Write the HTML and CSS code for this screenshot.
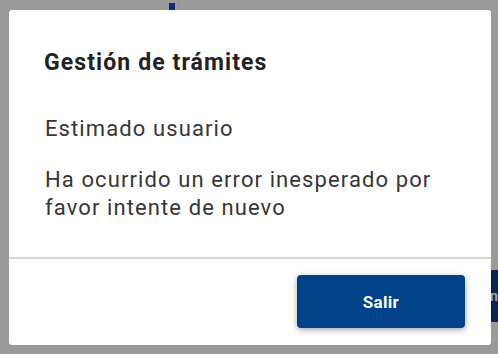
FILE: index.html
```html
<!DOCTYPE html>
<html lang="es">

<head>
  <meta name="viewport" content="width=device-width, initial-scale=1.0">
  <title>Gestión de trámites</title>
  <link rel="stylesheet" href="styles.css">
</head>

<body>
  <div id="page-behind">
    <span class="behind-mark"></span>
    <span class="behind-rule"></span>
    <button type="button" class="behind-button">Ingresar</button>
  </div>

  <div id="modal-backdrop">
    <main id="modal-holder">
      <h1 id="modal-title">Gestión de trámites</h1>

      <div id="modal-body">
        <p class="modal-text">Estimado usuario</p>
        <p class="modal-text">Ha ocurrido un error inesperado por favor intente de nuevo</p>
      </div>

      <div id="modal-footer">
        <button type="button" class="button">Salir</button>
      </div>
    </main>
  </div>
</body>

</html>
```

FILE: styles.css
```css
html {
  height: 100%;
}

body {
  height: 100%;
  margin: 0;
  font-family: Roboto, "Liberation Sans", Arial, sans-serif;
  background-color: #f4f4f4;
  overflow: hidden;
}

#page-behind {
  position: absolute;
  inset: 0;
}

.behind-mark {
  position: absolute;
  left: 169px;
  top: 3px;
  width: 6px;
  height: 7px;
  background-color: #1f3fbf;
}

.behind-rule {
  position: absolute;
  left: 178px;
  top: 0;
  width: 1px;
  height: 10px;
  background-color: #e6e6e6;
}

.behind-button {
  position: absolute;
  left: 452px;
  top: 270px;
  width: 120px;
  height: 52px;
  border: none;
  border-radius: 4px;
  background-color: #0b3f86;
  color: white;
  font-family: Roboto, sans-serif;
  font-weight: bold;
  font-size: 14px;
}

#modal-backdrop {
  position: absolute;
  inset: 0;
  background-color: rgba(0, 0, 0, 0.37);
  padding: 10px 7px 9px 9px;
  box-sizing: border-box;
}

#modal-holder {
  height: 100%;
  display: flex;
  flex-direction: column;
  background-color: white;
  border-radius: 3px;
  box-sizing: border-box;
}

#modal-title {
  margin: 0;
  padding: 39px 30px 0 35px;
  font-size: 23px;
  line-height: 28px;
  letter-spacing: 1.1px;
  font-weight: bold;
  color: #222222;
}

#modal-body {
  flex: 1;
  padding: 38px 25px 0 36px;
}

.modal-text {
  margin: 0 0 23px 0;
  font-size: 22px;
  line-height: 28px;
  letter-spacing: 1.1px;
  color: #363636;
}

#modal-footer {
  border-top: 2px solid #d6d6d6;
  display: flex;
  justify-content: flex-end;
  padding: 16px 26px 17px 0;
}

.button {
  width: 168px;
  height: 53px;
  border: none;
  border-radius: 4px;
  background-color: #00428a;
  color: white;
  font-family: Roboto, sans-serif;
  font-size: 17px;
  letter-spacing: 0.3px;
  font-weight: bold;
  box-shadow: 0px 2px 6px rgba(0, 0, 0, 0.35);
  cursor: pointer;
}
```
